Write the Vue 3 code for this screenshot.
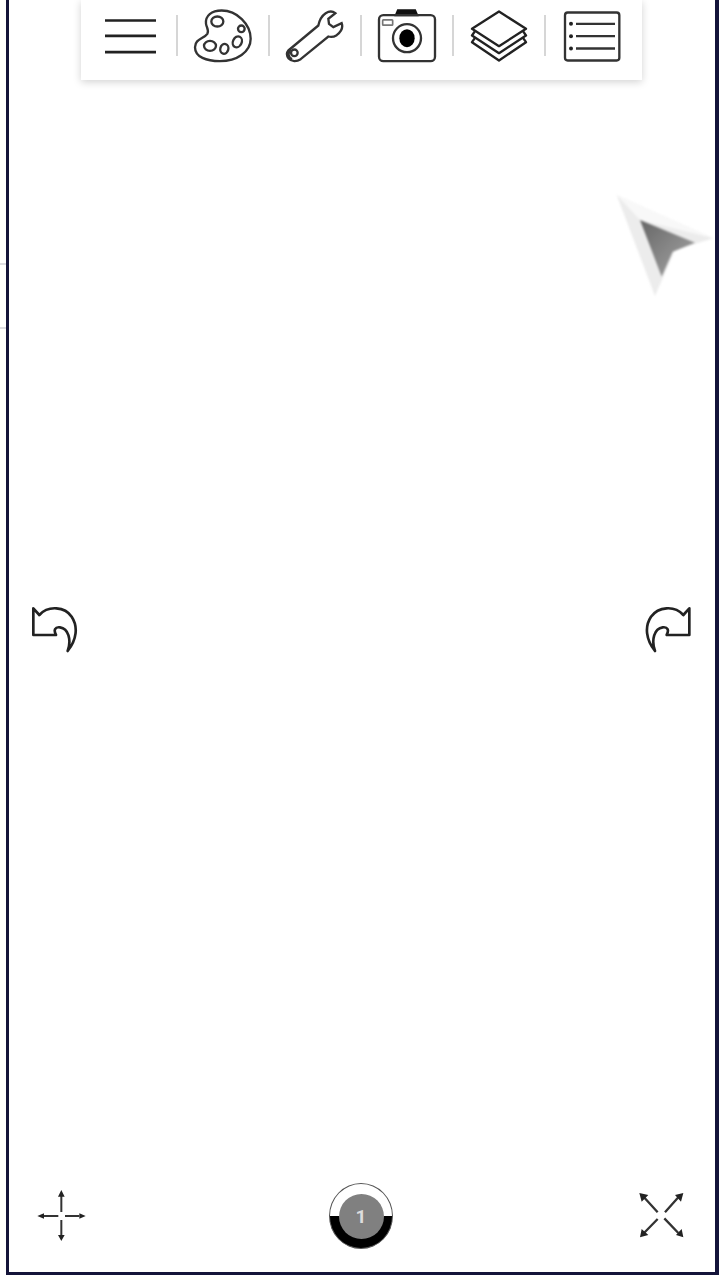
<script setup>
// rows of the legend icon, in the icon's own coordinates
const listRows = [70, 107, 144]
</script>

<template>
  <div class="page">
    <div class="gutter">
      <span class="stub"></span>
      <span class="stub"></span>
    </div>

    <div class="screen">
      <!-- Toolbar -->
      <div class="toolbar">
        <div class="tool">
          <svg class="icon" viewBox="63 16.5 180 180">
            <path d="M75 60H228M75 106H228M75 155H228" fill="none" stroke="#222" stroke-width="8" />
          </svg>
        </div>
        <div class="tool">
          <svg class="icon" viewBox="339 16.5 180 180" fill="none" stroke="#333" stroke-width="7">
            <path d="M378 70C375 45 395 30 425 30C470 30 512 70 512 115C512 155 470 182 420 182C380 182 345 170 345 140C345 115 372 115 382 100C388 90 380 82 378 70Z" />
            <ellipse cx="412" cy="63" rx="18" ry="15" />
            <circle cx="484" cy="85" r="10" />
            <ellipse cx="472" cy="124" rx="13" ry="17" transform="rotate(25 472 124)" />
            <ellipse cx="433" cy="145" rx="12" ry="15" transform="rotate(15 433 145)" />
            <ellipse cx="390" cy="136" rx="18" ry="15" />
          </svg>
        </div>
        <div class="tool">
          <svg class="icon" viewBox="615 16.5 180 180" fill="none" stroke="#333" stroke-width="7">
            <path d="M625 150L715 75C718 60 722 48 737 38C747 32 758 32 766 38L745 55L747 70L760 80L785 68C790 82 782 95 770 104C762 109 752 110 745 108L662 176C650 184 635 184 626 174C620 166 620 156 625 150Z" />
            <circle cx="643" cy="157" r="10" />
            <path d="M632 146C622 156 624 170 636 176" />
          </svg>
        </div>
        <div class="tool">
          <svg class="icon" viewBox="51 16.5 180 180" fill="none" stroke="#333" stroke-width="7">
            <path d="M108 44L114 30H165L171 44Z" fill="#111" stroke="#111" />
            <rect x="57" y="44" width="168" height="138" rx="13" />
            <rect x="68" y="58" width="30" height="16" rx="2" stroke="#777" stroke-width="5" />
            <circle cx="141" cy="113" r="42" />
            <ellipse cx="141" cy="113" rx="23" ry="27" fill="#000" stroke="none" />
          </svg>
        </div>
        <div class="tool">
          <svg class="icon" viewBox="327 16.5 180 180" fill="none" stroke="#222" stroke-width="7" stroke-linejoin="round">
            <path d="M417 33L498 85L417 137L336 85Z" />
            <path d="M345 92L336 105L417 158L498 105L489 92" />
            <path d="M345 112L336 125L417 180L498 125L489 112" />
          </svg>
        </div>
        <div class="tool">
          <svg class="icon" viewBox="603 16.5 180 180" fill="none" stroke="#333" stroke-width="7">
            <rect x="612" y="36" width="163" height="144" rx="8" />
            <g v-for="y in listRows" :key="y">
              <circle cx="630" :cy="y" r="6" fill="#222" stroke="none" />
              <path :d="`M645 ${y}H762`" />
            </g>
          </svg>
        </div>
      </div>

      <!-- Compass pointer -->
      <svg class="pointer" viewBox="0 0 360 390">
        <defs>
          <linearGradient id="pointerFill" x1="0" y1="0" x2="1" y2="1">
            <stop offset="0" stop-color="#666" />
            <stop offset="1" stop-color="#a8a8a8" />
          </linearGradient>
        </defs>
        <path d="M50 45L340 175L225 210L165 348Z" fill="#ececec" />
        <path d="M50 45L340 175L120 120Z" fill="#f8f8f8" />
        <path d="M120 120L285 188L218 215L185 290Z" fill="url(#pointerFill)" />
      </svg>

      <!-- Undo / redo -->
      <div class="side-row">
        <svg class="icon" viewBox="72 30 180 180">
          <path d="M100 55L118 75C145 45 195 50 215 80C235 110 230 150 203 183C215 150 205 115 180 112C165 110 160 120 168 135H100Z" fill="#fff" stroke="#222" stroke-width="8" stroke-linejoin="round" />
        </svg>
        <svg class="icon" viewBox="24 30 180 180">
          <path d="M178 55L160 75C133 45 85 50 63 80C43 110 48 150 75 183C63 150 73 115 98 112C113 110 118 120 110 135H178Z" fill="#fff" stroke="#222" stroke-width="8" stroke-linejoin="round" />
        </svg>
      </div>

      <!-- Bottom controls -->
      <div class="bottom-row">
        <svg class="icon" viewBox="93 50 180 180">
          <path d="M184 80V128M184 152V197M130 140H175M195 140H238" stroke="#333" stroke-width="6" fill="none" />
          <path d="M184 62L174 82H194ZM184 215L174 197H194ZM112 140L132 132V148ZM257 140L238 132V148Z" fill="#222" />
        </svg>

        <div class="badge">
          <span class="badge-num">1</span>
        </div>

        <svg class="icon" viewBox="33 51 180 180">
          <path d="M113 130L72 85M135 130L175 85M113 150L72 192M133 148L175 192" stroke="#333" stroke-width="7" fill="none" />
          <path d="M58 72L85 78L65 98ZM190 72L165 78L183 98ZM60 205L65 180L85 198ZM190 205L168 198L185 180Z" fill="#222" />
        </svg>
      </div>
    </div>
  </div>
</template>

<style>
body {
  background: #fff;
}
</style>

<style scoped>
.page {
  display: flex;
  width: 720px;
  height: 1280px;
  overflow: hidden;
  font-family: Roboto, "Liberation Sans", sans-serif;
}

.gutter {
  width: 6px;
  flex: none;
  display: flex;
  flex-direction: column;
  gap: 62px;
  padding-top: 263px;
  box-sizing: border-box;
}

.stub {
  height: 2px;
  background: #dcdce2;
}

.screen {
  position: relative;
  width: 713px;
  height: 1275px;
  flex: none;
  box-sizing: border-box;
  border-left: 3px solid #14143a;
  border-right: 4px solid #14143a;
  border-bottom: 3px solid #14143a;
  display: flex;
  flex-direction: column;
}

.icon {
  display: block;
  width: 60px;
  height: 60px;
  flex: none;
  filter: blur(0.5px);
}

/* toolbar */
.toolbar {
  align-self: flex-start;
  margin-left: 72px;
  width: 561px;
  height: 80px;
  box-sizing: border-box;
  padding: 0 4px 9px 5px;
  display: flex;
  align-items: center;
  background: #fff;
  box-shadow: 0 2px 8px rgba(0, 0, 0, 0.18);
}

.tool {
  position: relative;
  width: 92px;
  height: 41px;
  flex: none;
  display: flex;
  align-items: center;
  justify-content: center;
  border-right: 2px solid #d6d6d6;
  box-sizing: border-box;
}

.tool:last-child {
  border-right: none;
}

.pointer {
  position: absolute;
  left: 591px;
  top: 180px;
  width: 120px;
  height: 130px;
  filter: blur(0.8px);
}

.side-row {
  display: flex;
  justify-content: space-between;
  margin-top: 520px;
  padding: 0 17px 0 15px;
}

.bottom-row {
  margin-top: auto;
  display: flex;
  align-items: center;
  justify-content: space-between;
  padding: 0 24px 23px 22px;
}

.badge {
  position: relative;
  width: 64px;
  height: 66px;
  flex: none;
  box-sizing: border-box;
  border-radius: 50%;
  border: 1px solid #555;
  background: linear-gradient(#fff 50%, #000 50%);
  display: flex;
  align-items: center;
  justify-content: center;
}

.badge-num {
  width: 45px;
  height: 45px;
  border-radius: 50%;
  background: #808080;
  color: #ddd;
  font-size: 19px;
  font-weight: 700;
  display: flex;
  align-items: center;
  justify-content: center;
}
</style>
